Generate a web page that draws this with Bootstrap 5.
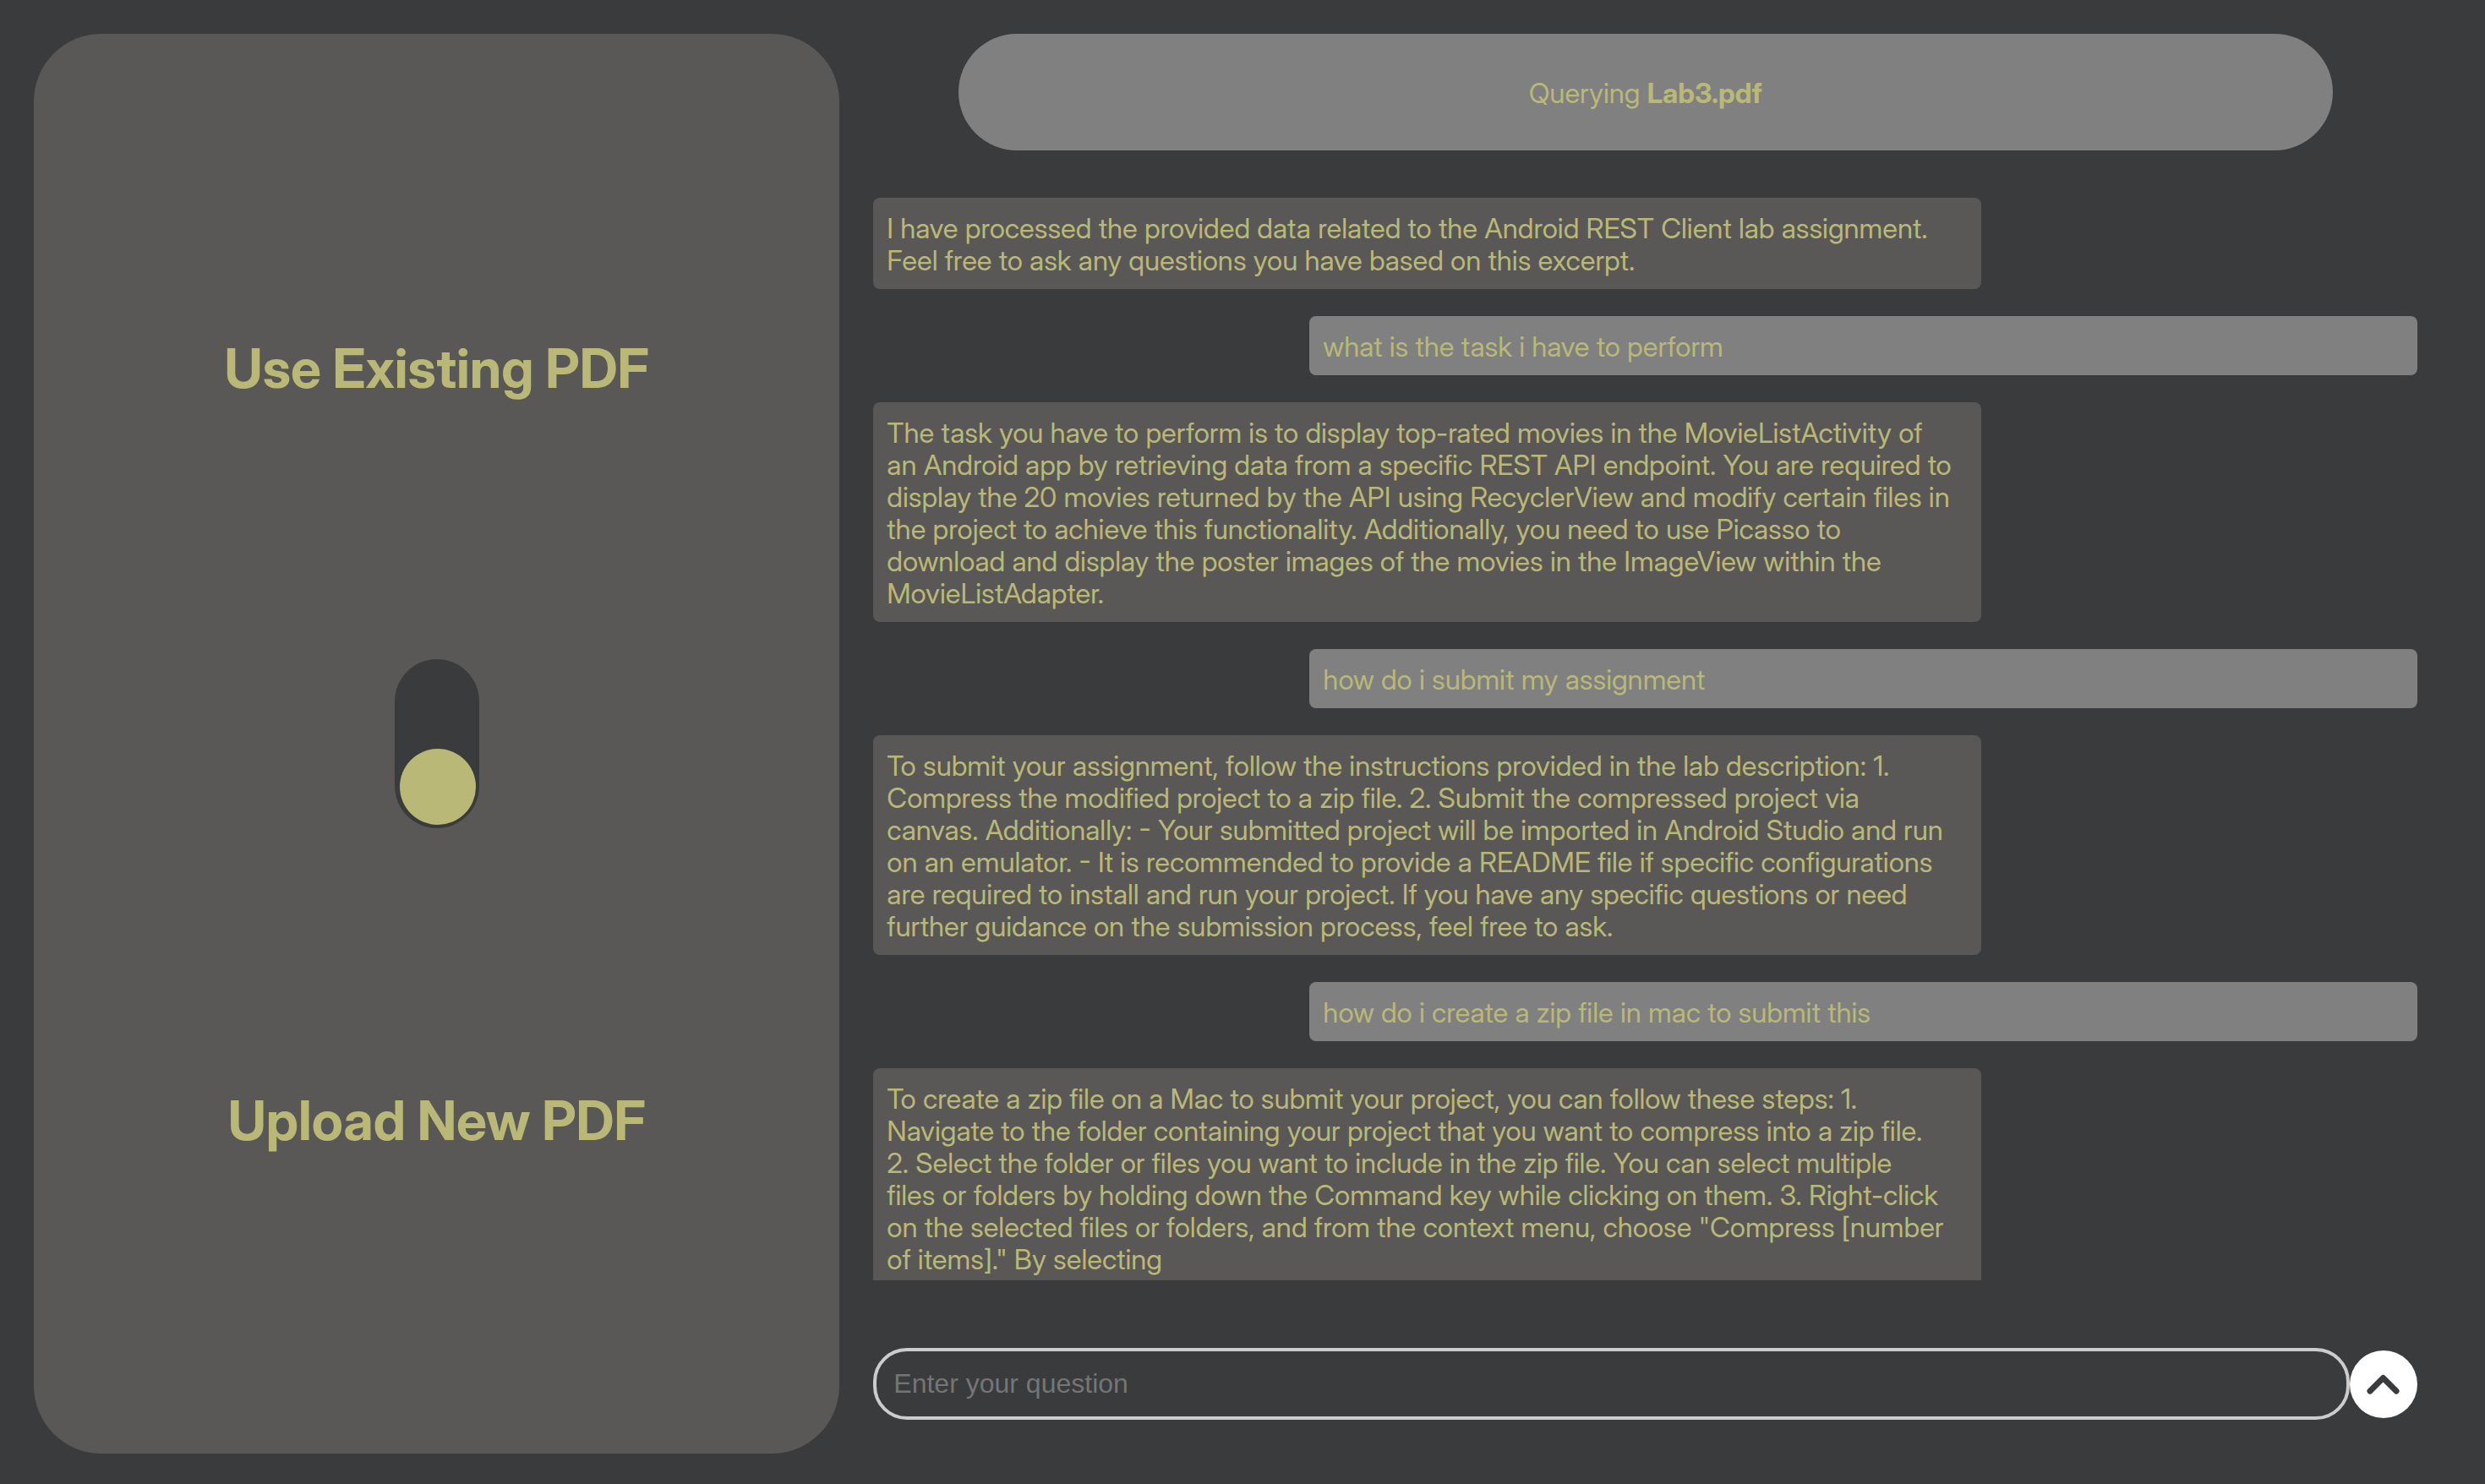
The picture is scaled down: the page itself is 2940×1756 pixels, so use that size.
<!DOCTYPE html>
<html lang="en">
<head>
<meta charset="utf-8">
<meta name="viewport" content="width=device-width, initial-scale=1">
<title>PDF Query</title>
<link href="https://cdn.jsdelivr.net/npm/bootstrap@5.3.0/dist/css/bootstrap.min.css" rel="stylesheet">
<style>
  :root { --page: #3a3b3c; --panel: #5a5856; --grey: #808080; --khaki: #b9b876; }
  body { background: var(--page); color: var(--khaki); font-family: "Inter Display", Inter, "Noto Sans", sans-serif; font-size: 33px; line-height: 38px; padding: 40px 40px 36px; }
  .side-panel { background: var(--panel); border-radius: 80px; gap: 307px; }
  .side-title { font-size: 64px; line-height: 74px; font-weight: 700; padding-top: 2px; }
  .mode-toggle { appearance: none; width: 100px; height: 200px; margin: 0; padding: 4px 4px 4px 6px; border-radius: 50px; background: var(--page); display: flex; align-items: flex-end; cursor: pointer; }
  .mode-toggle::before { content: ""; width: 90px; height: 90px; border-radius: 50%; background: var(--khaki); }
  .mode-toggle:checked { align-items: flex-start; }
  .chat-col { padding: 0 40px 40px; }
  .doc-banner { width: 89%; padding: 51px 0 49px; background: var(--grey); margin-bottom: 56px; }
  .chat-log { gap: 32px; min-height: 0; overflow-y: auto; scrollbar-width: none; margin-bottom: 80px; }
  .bubble { width: calc(70% + 32px); padding: 17px 16px 15px; border-radius: 8px; background: var(--panel); }
  .bubble-user { background: var(--grey); }
  .ask-input { min-width: 0; height: 85px; padding: 0 20px; border: 4px solid #ccc; border-radius: 40px; background: transparent; color: var(--khaki); font-family: "Liberation Sans", Arial, sans-serif; font-size: 32px; outline: 0; }
  .ask-input::placeholder { color: #757575; opacity: 1; }
  .ask-send { width: 80px; height: 80px; background: #fff; }
</style>
</head>
<body class="vh-100 overflow-hidden">
<div class="row g-0 h-100">
  <aside class="col-4 h-100 side-panel d-flex flex-column align-items-center justify-content-center">
    <h1 class="side-title m-0">Use Existing PDF</h1>
    <input class="mode-toggle flex-shrink-0" type="checkbox" role="switch" aria-label="Use existing PDF or upload a new one">
    <h1 class="side-title m-0">Upload New PDF</h1>
  </aside>
  <main class="col-8 h-100 chat-col d-flex flex-column">
    <header class="doc-banner rounded-pill text-center align-self-center flex-shrink-0">Querying <strong>Lab3.pdf</strong></header>
    <div class="chat-log d-flex flex-column flex-grow-1">
      <div class="bubble flex-shrink-0">I have processed the provided data related to the Android REST Client lab assignment.<br>
        Feel free to ask any questions you have based on this excerpt.</div>
      <div class="bubble bubble-user align-self-end flex-shrink-0">what is the task i have to perform</div>
      <div class="bubble flex-shrink-0">The task you have to perform is to display top-rated movies in the MovieListActivity of<br>
        an Android app by retrieving data from a specific REST API endpoint. You are required to<br>
        display the 20 movies returned by the API using RecyclerView and modify certain files in<br>
        the project to achieve this functionality. Additionally, you need to use Picasso to<br>
        download and display the poster images of the movies in the ImageView within the<br>
        MovieListAdapter.</div>
      <div class="bubble bubble-user align-self-end flex-shrink-0">how do i submit my assignment</div>
      <div class="bubble flex-shrink-0">To submit your assignment, follow the instructions provided in the lab description: 1.<br>
        Compress the modified project to a zip file. 2. Submit the compressed project via<br>
        canvas. Additionally: - Your submitted project will be imported in Android Studio and run<br>
        on an emulator. - It is recommended to provide a README file if specific configurations<br>
        are required to install and run your project. If you have any specific questions or need<br>
        further guidance on the submission process, feel free to ask.</div>
      <div class="bubble bubble-user align-self-end flex-shrink-0">how do i create a zip file in mac to submit this</div>
      <div class="bubble flex-shrink-0">To create a zip file on a Mac to submit your project, you can follow these steps: 1.<br>
        Navigate to the folder containing your project that you want to compress into a zip file.<br>
        2. Select the folder or files you want to include in the zip file. You can select multiple<br>
        files or folders by holding down the Command key while clicking on them. 3. Right-click<br>
        on the selected files or folders, and from the context menu, choose "Compress [number<br>
        of items]." By selecting</div>
    </div>
    <form class="d-flex align-items-center flex-shrink-0">
      <input class="ask-input flex-grow-1" type="text" placeholder="Enter your question" aria-label="Enter your question">
      <button class="ask-send border-0 rounded-circle p-0 d-flex flex-shrink-0" type="button" aria-label="Send">
        <svg width="80" height="80" viewBox="0 0 80 80" fill="none" stroke="#3a3b3c" stroke-width="7" stroke-linecap="round" stroke-linejoin="round" aria-hidden="true"><path d="M24 48L39.500 32.500L55 48"/></svg>
      </button>
    </form>
  </main>
</div>
<script src="https://cdn.jsdelivr.net/npm/bootstrap@5.3.0/dist/js/bootstrap.bundle.min.js"></script>
</body>
</html>
